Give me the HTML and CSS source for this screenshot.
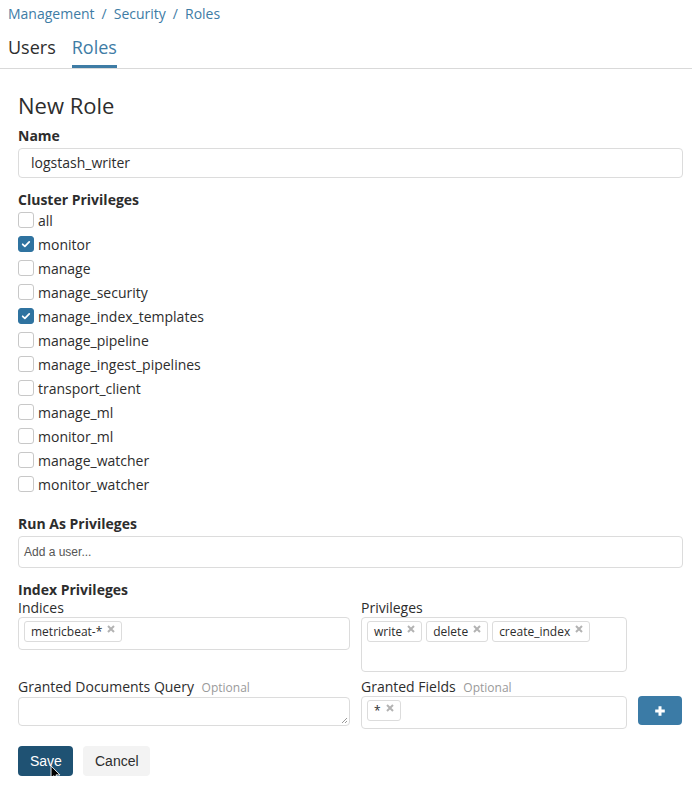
FILE: index.html
```html
<!DOCTYPE html>
<html>
<head>
<meta charset="utf-8">
<link rel="stylesheet" href="styles.css">
</head>
<body>
<div class="crumbs">
  <a class="crumb">Management</a><span class="sep">/</span><a class="crumb">Security</a><span class="sep">/</span><a class="crumb">Roles</a>
</div>
<div class="tabs">
  <div class="tab">Users</div>
  <div class="tab active">Roles</div>
</div>
<div class="form">
  <h1 class="title">New Role</h1>
  <div class="label">Name</div>
  <div class="input name-input">logstash_writer</div>

  <div class="label section">Cluster Privileges</div>
  <div class="checks">
    <div class="check"><span class="box"></span>all</div>
    <div class="check"><span class="box on"><svg viewBox="0 0 16 16"><path d="M4.2 8.3l2.5 2.4 5-5.2" /></svg></span>monitor</div>
    <div class="check"><span class="box"></span>manage</div>
    <div class="check"><span class="box"></span>manage_security</div>
    <div class="check"><span class="box on"><svg viewBox="0 0 16 16"><path d="M4.2 8.3l2.5 2.4 5-5.2" /></svg></span>manage_index_templates</div>
    <div class="check"><span class="box"></span>manage_pipeline</div>
    <div class="check"><span class="box"></span>manage_ingest_pipelines</div>
    <div class="check"><span class="box"></span>transport_client</div>
    <div class="check"><span class="box"></span>manage_ml</div>
    <div class="check"><span class="box"></span>monitor_ml</div>
    <div class="check"><span class="box"></span>manage_watcher</div>
    <div class="check"><span class="box"></span>monitor_watcher</div>
  </div>

  <div class="label runas">Run As Privileges</div>
  <div class="input user-input">Add a user...</div>

  <div class="label index">Index Privileges</div>
  <div class="grid">
    <div class="field">
      <div class="sublabel">Indices</div>
      <div class="tagbox indices"><span class="tag">metricbeat-*<svg class="x" viewBox="0 0 8 8"><path d="M1 1l6 6M7 1L1 7"/></svg></span></div>
    </div>
    <div class="field">
      <div class="sublabel">Privileges</div>
      <div class="tagbox privs"><span class="tag">write<svg class="x" viewBox="0 0 8 8"><path d="M1 1l6 6M7 1L1 7"/></svg></span><span class="tag">delete<svg class="x" viewBox="0 0 8 8"><path d="M1 1l6 6M7 1L1 7"/></svg></span><span class="tag">create_index<svg class="x" viewBox="0 0 8 8"><path d="M1 1l6 6M7 1L1 7"/></svg></span></div>
    </div>
    <div></div>
    <div class="field">
      <div class="sublabel">Granted Documents Query <span class="opt">Optional</span></div>
      <div class="textarea"><svg class="grip" viewBox="0 0 8 8"><path d="M7 2L2 7M7 5L5 7"/></svg></div>
    </div>
    <div class="field">
      <div class="sublabel">Granted Fields <span class="opt">Optional</span></div>
      <div class="tagbox fields"><span class="tag">*<svg class="x" viewBox="0 0 8 8"><path d="M1 1l6 6M7 1L1 7"/></svg></span></div>
    </div>
    <div class="plus-wrap"><div class="plus"><svg viewBox="0 0 12 12"><path d="M6 1.2v9.6M1.2 6h9.6"/></svg></div></div>
  </div>

  <div class="actions">
    <div class="btn save">Save
      <svg class="cursor" viewBox="0 0 12 19"><path d="M1 1v14l3.3-3.1 2.3 5.2 2.1-.9-2.2-5.1H11z" /></svg>
    </div>
    <div class="btn cancel">Cancel</div>
  </div>
</div>
</body>
</html>
```

FILE: styles.css
```css
* { box-sizing: border-box; }
body {
  margin: 0;
  font-family: "Open Sans", "Liberation Sans", sans-serif;
  color: #2d2d2d;
  background: #fff;
  font-size: 14px;
}
.crumbs {
  height: 28px;
  line-height: 28px;
  padding: 0 8px;
  font-size: 14px;
  color: #3e7ca5;
}
.crumb { color: #3e7ca5; }
.sep { margin: 0 7px; color: #3e7ca5; }
.tabs {
  display: flex;
  gap: 16px;
  padding: 0 8px;
  border-bottom: 1px solid #d9d9d9;
}
.tab {
  font-size: 18px;
  line-height: 26px;
  padding-top: 6px;
  padding-bottom: 5px;
  border-bottom: 3px solid transparent;
  color: #2d2d2d;
}
.tab.active { color: #3e7ca5; border-bottom-color: #3e7ca5; }
.form { padding: 0 9px 0 18px; }
.title {
  margin: 21px 0 6px;
  font-size: 22px;
  line-height: 30px;
  font-weight: 400;
}
.label {
  font-weight: 700;
  font-size: 14px;
  line-height: 20px;
}
.label.section { margin-top: 14px; line-height: 16px; }
.label.runas { margin-top: 18px; }
.label.index { margin-top: 13px; line-height: 18px; }
.input {
  border: 1px solid #dcdcdc;
  border-radius: 4px;
  background: #fff;
}
.name-input {
  margin-top: 2px;
  height: 30px;
  line-height: 28px;
  padding-left: 12px;
  font-size: 14px;
}
.user-input {
  margin-top: 2px;
  height: 32px;
  line-height: 30px;
  padding-left: 5px;
  font-family: "Liberation Sans", Arial, sans-serif;
  font-size: 12px;
  color: #555;
}
.checks { display: flex; flex-direction: column; }
.check {
  display: flex;
  align-items: center;
  height: 24px;
  font-size: 14px;
}
.box {
  width: 16px;
  height: 16px;
  border: 1px solid #c8c8c8;
  border-radius: 3px;
  margin-right: 4px;
  background: #fff;
  display: flex;
}
.box.on { background: #2f73a0; border-color: #2f73a0; }
.box svg { width: 14px; height: 14px; fill: none; stroke: #fff; stroke-width: 2; stroke-linecap: round; stroke-linejoin: round; }
.grid {
  display: grid;
  grid-template-columns: 332px 266px 44px;
  column-gap: 11px;
  row-gap: 6px;
}
.sublabel {
  font-size: 14px;
  line-height: 18px;
  white-space: nowrap;
}
.opt { font-size: 12px; color: #9a9a9a; margin-left: 4px; }
.tagbox {
  border: 1px solid #dcdcdc;
  border-radius: 4px;
  padding: 3px 5px;
  display: flex;
  flex-wrap: wrap;
  align-items: flex-start;
  gap: 4px;
}
.indices { height: 33px; }
.privs { height: 55px; }
.fields { height: 33px; margin-top: -1px; }
.tag {
  display: inline-flex;
  align-items: center;
  height: 21px;
  border: 1px solid #dcdcdc;
  border-radius: 3px;
  padding: 0 6px;
  font-size: 12px;
  line-height: 19px;
  background: #fff;
}
.x {
  width: 8px;
  height: 8px;
  margin-left: 5px;
  margin-top: -5px;
  stroke: #b3b3b3;
  stroke-width: 2;
  fill: none;
}
.textarea {
  height: 29px;
  border: 1px solid #dcdcdc;
  border-radius: 4px;
  position: relative;
}
.grip { position: absolute; right: 1px; bottom: 1px; width: 8px; height: 8px; stroke: #999; stroke-width: 1; }
.plus-wrap { padding-top: 18px; }
.plus {
  height: 29px;
  background: #3b7ba6;
  border-radius: 4px;
  display: flex;
  align-items: center;
  justify-content: center;
}
.plus svg { width: 12px; height: 12px; stroke: #fff; stroke-width: 3; }
.actions { display: flex; gap: 10px; margin-top: 17px; }
.btn {
  height: 30px;
  line-height: 30px;
  border-radius: 4px;
  font-family: "Liberation Sans", Arial, sans-serif;
  font-size: 14px;
  padding: 0 12px;
}
.save { background: #1f5273; color: #fff; position: relative; width: 55px; }
.cancel { background: #f3f3f3; color: #2d2d2d; width: 67px; }
.cursor {
  position: absolute;
  left: 32px;
  top: 19px;
  width: 11px;
  height: 17px;
  fill: #000;
  stroke: #fff;
  stroke-width: 1;
}
```
